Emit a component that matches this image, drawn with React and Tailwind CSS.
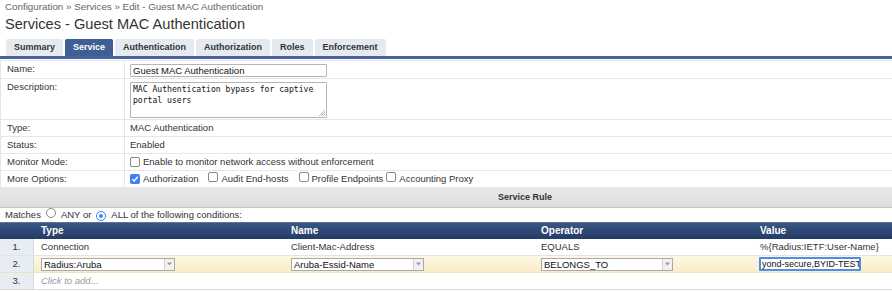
import React from 'react';

const tabs = ['Summary', 'Service', 'Authentication', 'Authorization', 'Roles', 'Enforcement'];

function Checkbox({ checked }) {
  return checked ? (
    <span className="inline-flex w-[10px] h-[10px] rounded-[2px] bg-[#3b82f6] items-center justify-center">
      <svg width="8" height="8" viewBox="0 0 8 8">
        <path d="M1.3 4.2 L3.2 6 L6.8 1.8" stroke="#fff" strokeWidth="1.4" fill="none" />
      </svg>
    </span>
  ) : (
    <span className="inline-block w-[10px] h-[10px] rounded-[2px] border border-[#8a8a8a] bg-white" />
  );
}

function Radio({ checked }) {
  return checked ? (
    <span className="inline-flex w-[10px] h-[10px] rounded-full border-[1.5px] border-[#3b82f6] items-center justify-center bg-white">
      <span className="w-[4px] h-[4px] rounded-full bg-[#3b82f6]" />
    </span>
  ) : (
    <span className="inline-block w-[10px] h-[10px] rounded-full border border-[#8a8a8a] bg-white" />
  );
}

function Select({ value, width }) {
  return (
    <div className={`flex h-[13px] border border-[#a9a9a9] bg-white ${width}`}>
      <span className="flex-1 pl-[2px] leading-[11px] text-[#111]">{value}</span>
      <span className="w-[10px] border-l border-[#d0d0d0] bg-[#f1f1f1] flex items-center justify-center">
        <svg width="5" height="4" viewBox="0 0 5 4">
          <path d="M0 0.5 L5 0.5 L2.5 3.5 Z" fill="#9a9a9a" />
        </svg>
      </span>
    </div>
  );
}

const formRows = [
  { label: 'Name:', h: 'h-[18px]' },
  { label: 'Description:', h: 'h-[41px]' },
  { label: 'Type:', h: 'h-[17px]' },
  { label: 'Status:', h: 'h-[17px]' },
  { label: 'Monitor Mode:', h: 'h-[17px]' },
  { label: 'More Options:', h: 'h-[17px]' },
];

function FormValue({ index }) {
  if (index === 0)
    return (
      <div className="mt-[3px] w-[197px] h-[13px] border border-[#b5b5b5] rounded-[1px] pl-[2px] leading-[11px] text-[#111]">
        Guest MAC Authentication
      </div>
    );
  if (index === 1)
    return (
      <div className="relative mt-[3px] w-[197px] h-[36px] border border-[#b5b5b5] rounded-[1px] pl-[2px] pt-[1px] font-['DejaVu_Sans_Mono',monospace] text-[8.1px] leading-[11px] text-[#111]">
        MAC Authentication bypass for captive
        <br />
        portal users
        <svg className="absolute right-[1px] bottom-[1px]" width="6" height="6" viewBox="0 0 6 6">
          <path d="M6 0 L0 6 M6 2 L2 6 M6 4 L4 6" stroke="#999" strokeWidth="0.7" />
        </svg>
      </div>
    );
  if (index === 2) return <span className="leading-[16px]">MAC Authentication</span>;
  if (index === 3) return <span className="leading-[16px]">Enabled</span>;
  if (index === 4)
    return (
      <div className="flex items-center h-[16px] gap-[3px]">
        <Checkbox />
        <span>Enable to monitor network access without enforcement</span>
      </div>
    );
  return (
    <div className="flex items-center h-[16px]">
      <Checkbox checked />
      <span className="ml-[3px]">Authorization</span>
      <span className="ml-[10px]"><Checkbox /></span>
      <span className="ml-[3px]">Audit End-hosts</span>
      <span className="ml-[10px]"><Checkbox /></span>
      <span className="ml-[3px]">Profile Endpoints</span>
      <span className="ml-[3px]"><Checkbox /></span>
      <span className="ml-[3px]">Accounting Proxy</span>
    </div>
  );
}

export default function App() {
  return (
    <div className="w-[892px] h-[292px] overflow-hidden bg-white font-['Liberation_Sans',Arial,sans-serif] text-[9.5px] text-[#333]">
      {/* breadcrumb + title */}
      <div className="pl-[5px] pt-[1px] h-[13px] text-[9.8px] leading-[11px] text-[#666]">
        Configuration » Services » Edit - Guest MAC Authentication
      </div>
      <div className="pl-[5px] h-[25px] text-[14.6px] leading-[23px] text-[#333]">
        Services - Guest MAC Authentication
      </div>

      {/* tabs */}
      <div className="flex gap-[2px] pl-[6px] border-b-[3px] border-[#46639a] pt-[1px]">
        {tabs.map((t) => (
          <div
            key={t}
            className={`h-[17px] px-[8px] rounded-t-[2px] font-bold text-[9px] leading-[17px] ${
              t === 'Service' ? 'bg-[#3f5e94] text-white' : 'bg-[#e5e9f0] text-[#333]'
            }`}
          >
            {t}
          </div>
        ))}
      </div>

      {/* form */}
      <div className="mt-[1px] border-t border-l border-[#e2e7ee]">
        {formRows.map((r, i) => (
          <div key={r.label} className={`flex border-b border-[#e2e7ee] ${r.h}`}>
            <div className="w-[124px] shrink-0 border-r border-[#e2e7ee] pl-[6px] leading-[16px]">{r.label}</div>
            <div className="pl-[5px] flex-1">
              <FormValue index={i} />
            </div>
          </div>
        ))}
      </div>

      {/* service rule */}
      <div className="h-[20px] bg-gradient-to-b from-[#e8e8e8] to-[#dedede] border-b border-[#c4c4c4] flex items-center pl-[498px] font-bold text-[9px] text-[#333]">
        Service Rule
      </div>
      <div className="h-[14px] flex items-center pl-[5px] text-[9.5px]">
        <span>Matches</span>
        <span className="ml-[5px]"><Radio /></span>
        <span className="ml-[5px]">ANY or</span>
        <span className="ml-[5px]"><Radio checked /></span>
        <span className="ml-[5px]">ALL of the following conditions:</span>
      </div>

      {/* conditions table */}
      <div className="flex h-[17px] bg-gradient-to-b from-[#3a5683] to-[#233c66] border-t border-[#5d7398] text-white font-bold text-[10px] leading-[15px]">
        <div className="w-[34px]" />
        <div className="w-[250px] pl-[7px]">Type</div>
        <div className="w-[250px] pl-[7px]">Name</div>
        <div className="w-[219px] pl-[7px]">Operator</div>
        <div className="flex-1 pl-[7px]">Value</div>
      </div>

      <div className="flex h-[17px] border-b border-[#e0e5ec] leading-[16px]">
        <div className="w-[34px] bg-[#e8edf4] border-r border-[#d3dae4] text-center">1.</div>
        <div className="w-[250px] pl-[7px]">Connection</div>
        <div className="w-[250px] pl-[7px]">Client-Mac-Address</div>
        <div className="w-[219px] pl-[7px]">EQUALS</div>
        <div className="flex-1 pl-[7px]">%{'{'}Radius:IETF:User-Name{'}'}</div>
      </div>

      <div className="flex h-[17px] border-b border-[#ece3c4] bg-gradient-to-b from-[#fdf8e4] to-[#f9edc6] items-center">
        <div className="w-[34px] h-full bg-[#e8edf4] border-r border-[#d3dae4] text-center leading-[16px]">2.</div>
        <div className="w-[250px] pl-[7px]">
          <Select value="Radius:Aruba" width="w-[134px]" />
        </div>
        <div className="w-[250px] pl-[7px]">
          <Select value="Aruba-Essid-Name" width="w-[133px]" />
        </div>
        <div className="w-[219px] pl-[7px]">
          <Select value="BELONGS_TO" width="w-[132px]" />
        </div>
        <div className="flex-1 pl-[6px]">
          <div className="w-[102px] h-[14px] border-2 border-[#4d8fe8] rounded-[1px] bg-white overflow-hidden flex items-center pl-px">
            <span className="text-[#111] text-[9px] whitespace-nowrap leading-[10px]">yond-secure,BYID-TEST</span>
            <span className="w-px h-[9px] bg-black ml-[1px]" />
          </div>
        </div>
      </div>

      <div className="flex h-[17px] border-b border-[#d6dbe2] leading-[16px]">
        <div className="w-[34px] bg-[#e8edf4] border-r border-[#d3dae4] text-center">3.</div>
        <div className="pl-[7px] italic text-[#9a9a9a]">Click to add...</div>
      </div>
    </div>
  );
}
